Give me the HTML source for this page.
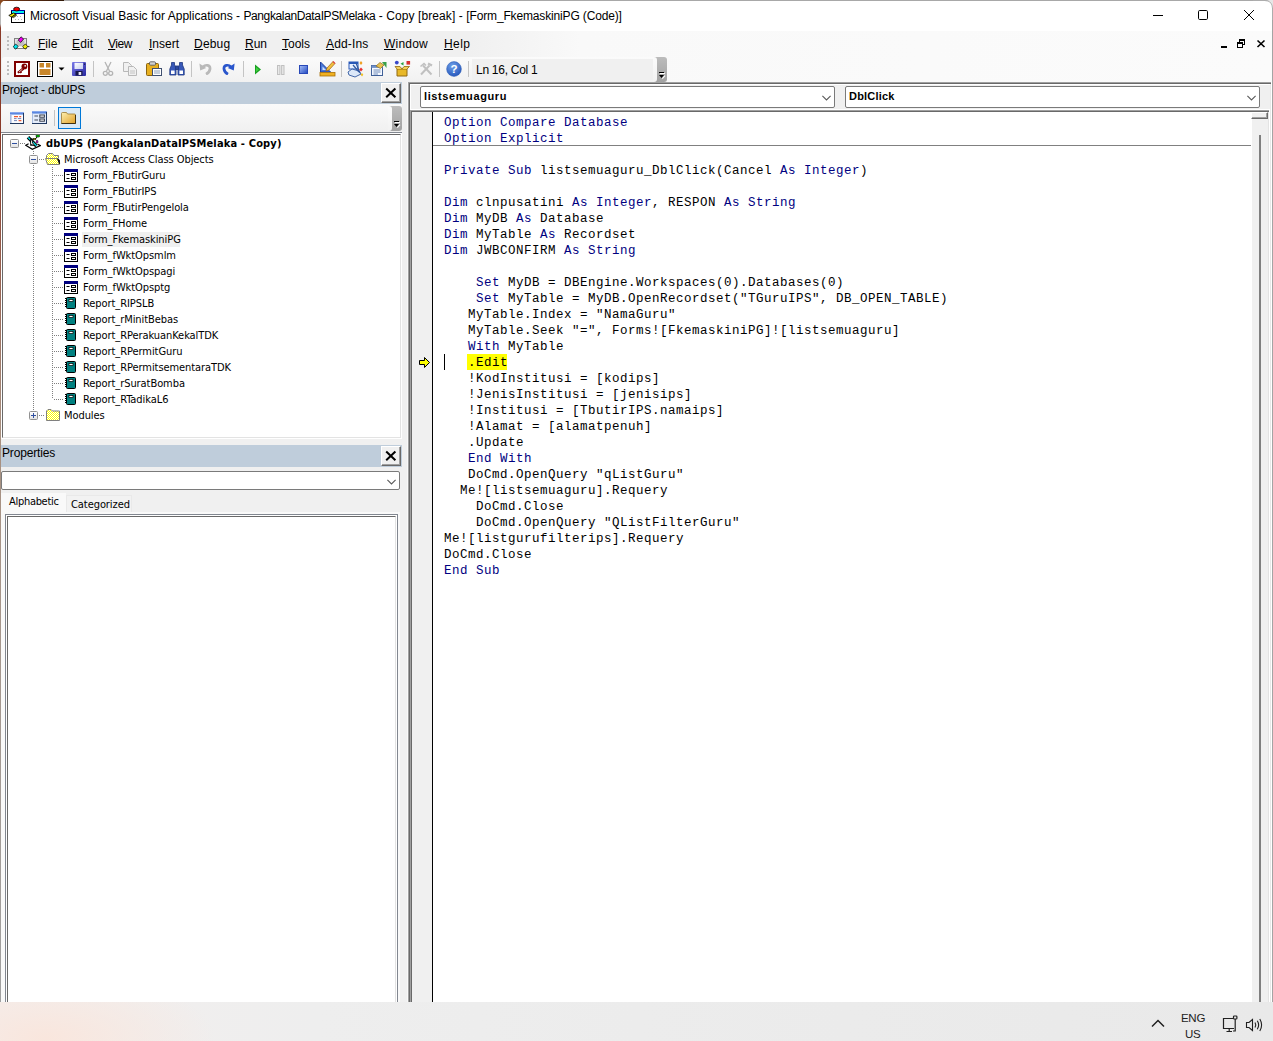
<!DOCTYPE html>
<html lang="en"><head><meta charset="utf-8"><title>Microsoft Visual Basic for Applications</title>
<style>
*{margin:0;padding:0;box-sizing:border-box}
html,body{width:1273px;height:1041px;overflow:hidden;background:#fff}
body{position:relative;font-family:"Liberation Sans",sans-serif;font-size:12px;color:#000}
.a{position:absolute}
.t{position:absolute;white-space:pre;line-height:1}
.ui{font-family:"Liberation Sans",sans-serif;font-size:11.6px}
.th{font-family:"DejaVu Sans Condensed","Liberation Sans",sans-serif;font-size:11px;letter-spacing:-0.07px}
.mono{font-family:"Liberation Mono",monospace;font-size:12.5px;letter-spacing:0.5px;line-height:16px;white-space:pre}
.k{color:#000080}
u{text-decoration:underline;text-underline-offset:1px}
</style></head>
<body>
<div class="a" style="left:0px;top:0px;width:1273px;height:1041px;background:#f0f0f0"></div>
<div class="a" style="left:0px;top:0px;width:1273px;height:31px;background:#fff"></div>
<div class="a" style="left:0px;top:31px;width:1273px;height:51px;background:linear-gradient(90deg,#f0f0f0 0,#f0f0f0 470px,#f9f9f9 580px,#fbfbfb 100%)"></div>
<div class="a" style="left:0px;top:0px;width:1px;height:1002px;background:linear-gradient(180deg,#b8b8b8 0,#b8b8b8 24px,#8a3a28 28px,#8a3a28 140px,#a89080 430px,#a0a0a0 1000px)"></div>
<div class="a" style="left:0px;top:0px;width:1273px;height:1px;background:#a8a8a8"></div>
<div class="a" style="left:0px;top:0px;width:64px;height:1px;background:linear-gradient(90deg,#7a3a18,#301808)"></div>
<svg class="a" style="left:0;top:0" width="6" height="6" viewBox="0 0 6 6"><path d="M0 0 H6 Q1 1 0 6 Z" fill="#8a4a20"/></svg>
<svg class="a" style="left:8px;top:6px" width="18" height="18" viewBox="0 0 18 18">
<rect x="3.5" y="4.5" width="13" height="12" fill="#fff" stroke="#000"/>
<rect x="3" y="4" width="14" height="1" fill="#0000a0"/><rect x="4" y="5" width="12" height="2" fill="#00f0f0"/><rect x="4" y="7" width="12" height="1" fill="#0000a0"/>
<ellipse cx="8.6" cy="3.1" rx="3" ry="1.9" fill="#f00000" stroke="#000" stroke-width=".8"/>
<path d="M0.8 9.4 L5.5 7 L8 8 L3.6 11 Z" fill="#f0f000" stroke="#000" stroke-width=".8"/><path d="M3.6 11 L8 8 L8.4 9.6 L5.6 11.6 Z" fill="#808000" stroke="#000" stroke-width=".6"/>
<g fill="#b0b0b0"><rect x="9" y="10" width="1" height="1"/><rect x="12" y="10" width="1" height="1"/><rect x="7" y="13" width="1" height="1"/><rect x="10" y="13" width="1" height="1"/><rect x="13" y="13" width="1" height="1"/></g>
</svg>
<div class="t ui" style="left:30px;top:10px;font-size:12px"><span style="letter-spacing:0.02px">Microsoft Visual Basic for Applications - </span><span style="letter-spacing:-0.37px">PangkalanDataIPSMelaka</span><span style="letter-spacing:0.09px"> - Copy [break] - </span><span style="letter-spacing:-0.15px">[Form_FkemaskiniPG (Code)]</span></div>
<svg class="a" style="left:1145px;top:0" width="128" height="31" viewBox="0 0 128 31" fill="none" stroke="#000" stroke-width="1">
<path d="M8 15.5 H18"/>
<rect x="53.5" y="10.5" width="9" height="9" rx="1.2"/>
<path d="M99 10 L109 20 M109 10 L99 20"/>
</svg>
<div class="a" style="left:7px;top:36px;width:2px;height:2px;background:#bcbcbc"></div>
<div class="a" style="left:7px;top:40px;width:2px;height:2px;background:#bcbcbc"></div>
<div class="a" style="left:7px;top:44px;width:2px;height:2px;background:#bcbcbc"></div>
<div class="a" style="left:7px;top:48px;width:2px;height:2px;background:#bcbcbc"></div>
<svg class="a" style="left:12px;top:35px" width="18" height="18" viewBox="0 0 18 18">
<rect x="2.5" y="3.5" width="12" height="10" fill="#e4e4e4" stroke="#808080"/>
<rect x="4.5" y="5.5" width="8" height="6" fill="#c0c0c0"/><rect x="6" y="11.5" width="5" height="1.5" fill="#fff"/>
<path d="M9 1.8 L11.6 4 L8.8 7.4 L6.2 5.2 Z" fill="#f000f0" stroke="#000" stroke-width=".7"/>
<path d="M3.6 9 L6.2 11.4 L3.8 14.2 L1.2 11.8 Z" fill="#00e8f0" stroke="#000" stroke-width=".7"/>
<path d="M13.4 9 L15.8 11.6 L13 14.2 L10.6 11.6 Z" fill="#f0f000" stroke="#000" stroke-width=".7"/>
<path d="M15.5 11.6 H17.5" stroke="#000" stroke-width=".8"/>
</svg>
<div class="t ui" style="left:38px;top:38px;font-size:12px;letter-spacing:0px"><u>F</u>ile</div>
<div class="t ui" style="left:72px;top:38px;font-size:12px;letter-spacing:0.15px"><u>E</u>dit</div>
<div class="t ui" style="left:108px;top:38px;font-size:12px;letter-spacing:-0.5px"><u>V</u>iew</div>
<div class="t ui" style="left:149px;top:38px;font-size:12px;letter-spacing:0px"><u>I</u>nsert</div>
<div class="t ui" style="left:194px;top:38px;font-size:12px;letter-spacing:0.2px"><u>D</u>ebug</div>
<div class="t ui" style="left:245px;top:38px;font-size:12px;letter-spacing:0px"><u>R</u>un</div>
<div class="t ui" style="left:282px;top:38px;font-size:12px;letter-spacing:0px"><u>T</u>ools</div>
<div class="t ui" style="left:326px;top:38px;font-size:12px;letter-spacing:0.15px"><u>A</u>dd-Ins</div>
<div class="t ui" style="left:384px;top:38px;font-size:12px;letter-spacing:0.2px"><u>W</u>indow</div>
<div class="t ui" style="left:444px;top:38px;font-size:12px;letter-spacing:0.4px"><u>H</u>elp</div>
<svg class="a" style="left:1215px;top:36px" width="56" height="16" viewBox="0 0 56 16" fill="none" stroke="#000">
<path d="M6 11 H12" stroke-width="2"/>
<g fill="#000" stroke="none" shape-rendering="crispEdges"><rect x="22" y="6" width="6" height="2"/><rect x="22" y="6" width="1" height="6"/><rect x="27" y="6" width="1" height="6"/><rect x="22" y="11" width="6" height="1"/>
<rect x="24" y="3" width="6" height="2"/><rect x="29" y="3" width="1" height="6"/><rect x="24" y="3" width="1" height="3"/><rect x="28" y="8" width="2" height="1"/></g>
<path d="M42.5 4.5 L49.5 11 M49.5 4.5 L42.5 11" stroke-width="1.6"/>
</svg>
<div class="a" style="left:2px;top:57px;width:665px;height:25px;background:linear-gradient(180deg,#fbfbfb,#f1f1f1);border-radius:3px 0 0 3px"></div>
<div class="a" style="left:7px;top:61px;width:2px;height:2px;background:#bcbcbc"></div>
<div class="a" style="left:7px;top:65px;width:2px;height:2px;background:#bcbcbc"></div>
<div class="a" style="left:7px;top:69px;width:2px;height:2px;background:#bcbcbc"></div>
<div class="a" style="left:7px;top:73px;width:2px;height:2px;background:#bcbcbc"></div>
<svg class="a" style="left:14px;top:61px" width="16" height="16" viewBox="0 0 16 16">
<rect x="1" y="1" width="14" height="14" fill="#fff" stroke="#800000" stroke-width="2"/>
<circle cx="10.4" cy="5.4" r="2.9" fill="#800000"/>
<path d="M8.6 6.6 L3.2 11 L4.4 12.6 L6 11.8 L6.6 12.6 L8 11.6 L7.6 10.6 L10.4 8.4 Z" fill="#800000"/>
<circle cx="11.2" cy="4.8" r=".9" fill="#fff"/><path d="M5 11 L8.4 8.2" stroke="#fff" stroke-width=".7"/>
</svg>
<svg class="a" style="left:37px;top:61px" width="16" height="16" viewBox="0 0 16 16">
<rect x="0.5" y="0.5" width="15" height="15" fill="#fff" stroke="#000"/>
<rect x="2.5" y="2" width="4.5" height="4.5" fill="#c8862a"/>
<rect x="9" y="2" width="4.5" height="4.5" fill="#c8862a"/>
<rect x="2.5" y="8" width="11" height="6" fill="#c8862a"/>
</svg>
<svg class="a" style="left:58px;top:67px" width="7" height="4" viewBox="0 0 7 4"><path d="M0.5 0.5 H6.5 L3.5 3.5 Z" fill="#000"/></svg>
<svg class="a" style="left:72px;top:62px" width="14" height="14" viewBox="0 0 14 14">
<defs><linearGradient id="sv" x1="0" y1="0" x2="1" y2="1"><stop offset="0" stop-color="#7878e8"/><stop offset="1" stop-color="#2828a0"/></linearGradient>
<linearGradient id="sl" x1="0" y1="0" x2="1" y2="1"><stop offset="0" stop-color="#ffffff"/><stop offset="1" stop-color="#c8d0f0"/></linearGradient></defs>
<rect x="0" y="0" width="14" height="14" rx="1" fill="url(#sv)"/>
<rect x="2.5" y="0.8" width="8.5" height="6.2" fill="url(#sl)"/>
<rect x="3.5" y="9" width="7" height="4.6" fill="#181848"/>
<rect x="6.6" y="10" width="2.6" height="3" fill="#e8e8f8"/><rect x="12.2" y="1.4" width="1" height="1.6" fill="#181848"/>
</svg>
<div class="a" style="left:93px;top:61px;width:1px;height:16px;background:#c4c4c4"></div>
<svg class="a" style="left:102px;top:61px" width="12" height="16" viewBox="0 0 12 16" fill="none" stroke="#b4b4b4" stroke-width="1.3">
<path d="M3 1 L7.5 10 M9 1 L4.5 10"/><circle cx="3.3" cy="12.3" r="2"/><circle cx="8.7" cy="12.3" r="2"/></svg>
<svg class="a" style="left:123px;top:62px" width="15" height="15" viewBox="0 0 15 15" fill="#f0f0f0" stroke="#b8b8b8">
<path d="M0.5 0.5 H5.5 L8.5 3.5 V9.5 H0.5 Z"/><path d="M5.5 4.5 H10.5 L13.5 7.5 V13.5 H5.5 Z"/><path d="M7 9 H12 M7 11 H12" stroke-width=".8"/></svg>
<svg class="a" style="left:146px;top:61px" width="17" height="16" viewBox="0 0 17 16">
<rect x="0.5" y="2.5" width="12" height="12" rx="1" fill="#e8b020" stroke="#8a6410"/>
<rect x="3.5" y="0.8" width="6" height="3.4" rx="1" fill="#d0d0d0" stroke="#505050" stroke-width=".8"/>
<rect x="6.5" y="7.5" width="9" height="7" fill="#fff" stroke="#405070"/>
<path d="M8 10 H14 M8 12 H14" stroke="#7088a8" stroke-width=".8"/></svg>
<svg class="a" style="left:169px;top:61px" width="16" height="16" viewBox="0 0 16 16" fill="#3858b8" stroke="#203880" stroke-width=".8">
<path d="M2.5 1.5 H5.5 V4 L7 7 V14 H0.8 V8 L2.5 4 Z"/><path d="M10.5 1.5 H13.5 V4 L15.2 8 V14 H9 V7 L10.5 4 Z"/>
<rect x="6.5" y="5" width="3" height="3.5" fill="#2a48a0"/>
<rect x="2" y="9.5" width="3.6" height="3.5" fill="#fff" stroke="none"/><rect x="10.4" y="9.5" width="3.6" height="3.5" fill="#fff" stroke="none"/></svg>
<div class="a" style="left:191px;top:61px;width:1px;height:16px;background:#c4c4c4"></div>
<svg class="a" style="left:199px;top:62px" width="14" height="13" viewBox="0 0 14 13" fill="none" stroke="#b9b9b9" stroke-width="2.7">
<path d="M4 5 C6.5 2.2 11.5 2.8 11 7 C10.7 9.4 9 11.2 7 12.2"/><path d="M0.4 1.6 L1.2 8.6 L7.2 6 Z" fill="#b9b9b9" stroke="none"/></svg>
<svg class="a" style="left:221px;top:62px" width="14" height="13" viewBox="0 0 14 13" fill="none" stroke="#2a56cc" stroke-width="2.7">
<path d="M10 5 C7.5 2.2 2.5 2.8 3 7 C3.3 9.4 5 11.2 7 12.2"/><path d="M13.6 1.6 L12.8 8.6 L6.8 6 Z" fill="#2a56cc" stroke="none"/></svg>
<div class="a" style="left:243px;top:61px;width:1px;height:16px;background:#c4c4c4"></div>
<svg class="a" style="left:255px;top:64px" width="6" height="11" viewBox="0 0 6 11"><path d="M0 0.5 L6 5.5 L0 10.5 Z" fill="#18a020"/><path d="M1 3 L4 5.5 L1 8 Z" fill="#40d040"/></svg>
<svg class="a" style="left:277px;top:65px" width="8" height="10" viewBox="0 0 8 10"><rect x="0.5" y="0.5" width="2.4" height="9" fill="#e8e8e8" stroke="#c0c0c0"/><rect x="4.6" y="0.5" width="2.4" height="9" fill="#e8e8e8" stroke="#c0c0c0"/></svg>
<svg class="a" style="left:299px;top:65px" width="9" height="9" viewBox="0 0 9 9"><defs><linearGradient id="st" x1="0" y1="0" x2="1" y2="1"><stop offset="0" stop-color="#a8c0f8"/><stop offset="1" stop-color="#2048c0"/></linearGradient></defs><rect x="0.5" y="0.5" width="8" height="8" fill="url(#st)" stroke="#2848b8"/></svg>
<svg class="a" style="left:319px;top:60px" width="17" height="17" viewBox="0 0 17 17">
<path d="M1.5 2 V12 H11.5 Z" fill="#4878d8" stroke="#2040a0"/><path d="M3.5 6.5 V10 H7 Z" fill="#cfe0ff"/>
<rect x="1" y="12.5" width="15" height="3.5" fill="#f0b020" stroke="#a87008" stroke-width=".8"/>
<path d="M7 11 L8 8 L14 1.5 L16 3.5 L10 10 Z" fill="#f0c040" stroke="#a06010" stroke-width=".7"/><path d="M13.5 2 L15.5 4 L16.3 3 L14.4 1 Z" fill="#e04848"/></svg>
<div class="a" style="left:341px;top:61px;width:1px;height:16px;background:#c4c4c4"></div>
<svg class="a" style="left:347px;top:60px" width="18" height="18" viewBox="0 0 18 18">
<rect x="2" y="2" width="9" height="7" fill="#e8f0ff" stroke="#2858b8"/><rect x="2" y="2" width="9" height="2" fill="#2858b8"/>
<path d="M1 12 L5 9 L12 11 L14 14 L8 17 L2 15 Z" fill="#dce8f8" stroke="#3058a0" stroke-width=".9"/>
<path d="M6 5 L12 12 M9 3 L13 13" stroke="#3058a0" stroke-width="1.2"/>
<path d="M14 1 L15.5 3 L14 5 L12.5 3 Z" fill="#f0a020"/><path d="M14 7.5 L15.8 9.5 L14 11.5 L12.2 9.5 Z" fill="#e83030"/><path d="M15 13 L16.3 14.8 L15 16.6 L13.7 14.8 Z" fill="#f0c020"/></svg>
<svg class="a" style="left:370px;top:61px" width="17" height="16" viewBox="0 0 17 16">
<rect x="1.5" y="4.5" width="11" height="10" fill="#f4f8ff" stroke="#406098"/><rect x="1.5" y="4.5" width="11" height="2.4" fill="#7090c8"/>
<path d="M3.5 9 H10.5 M3.5 11 H10.5 M3.5 13 H8" stroke="#6080b0" stroke-width=".9"/>
<path d="M6 5 L10 1.5 L14 4 L10.5 7.5 Z" fill="#e8c050" stroke="#907020" stroke-width=".7"/>
<path d="M12 1 H16.5 V7 Z" fill="#38a048"/></svg>
<svg class="a" style="left:394px;top:60px" width="17" height="18" viewBox="0 0 17 18">
<path d="M3 9 H13 V16 H3 Z" fill="#e8b828" stroke="#906810"/><path d="M3 9 L1 6.5 H6 L8 9 L10 6.5 H15.5 L13 9" fill="#f4d058" stroke="#906810" stroke-width=".8"/>
<circle cx="2.8" cy="2.6" r="1.9" fill="#3848c8"/><path d="M9.5 2 L6.5 3.8 L9.5 5.6 Z" fill="#28a040"/><rect x="12.5" y="1" width="3.6" height="3.6" fill="#d83030"/></svg>
<svg class="a" style="left:419px;top:62px" width="15" height="14" viewBox="0 0 15 14" fill="none" stroke="#c0c0c0" stroke-width="2">
<path d="M2 12.5 L10.5 3.5"/><path d="M12.5 12.5 L4 3.5"/><path d="M1.5 4.5 L5 1.5 L7 3.5" stroke-width="1.6"/><path d="M9 1.5 L13 3.5" stroke-width="2.2"/></svg>
<div class="a" style="left:439px;top:61px;width:1px;height:16px;background:#c4c4c4"></div>
<svg class="a" style="left:446px;top:61px" width="16" height="16" viewBox="0 0 18 18">
<defs><radialGradient id="hg" cx=".4" cy=".3" r=".8"><stop offset="0" stop-color="#6ea0e8"/><stop offset="1" stop-color="#2050b8"/></radialGradient></defs>
<circle cx="9" cy="9" r="8.3" fill="url(#hg)" stroke="#3060b8" stroke-width=".6"/>
<text x="9" y="13.6" text-anchor="middle" font-family="Liberation Sans,sans-serif" font-weight="bold" font-size="13" fill="#fff">?</text></svg>
<div class="a" style="left:468px;top:61px;width:1px;height:16px;background:#c4c4c4"></div>
<div class="a" style="left:472px;top:59px;width:182px;height:21px;background:#f0f0f0"></div>
<div class="t ui" style="left:476px;top:64px;font-size:12px;letter-spacing:-0.27px">Ln 16, Col 1</div>
<div class="a" style="left:654px;top:57px;width:13px;height:25px;background:linear-gradient(180deg,#bcbcbc,#a2a2a2);border-radius:0 3px 3px 0"></div>
<div class="a" style="left:653px;top:57px;width:4px;height:25px;background:linear-gradient(180deg,#fbfbfb,#f2f2f2);border-radius:0 3px 3px 0"></div>
<svg class="a" style="left:659px;top:72px" width="7" height="8" viewBox="0 0 7 8"><rect x="1" y="1" width="5" height="1" fill="#fff"/><rect x="0" y="0" width="5" height="1" fill="#000"/><path d="M3.3 6.6 L6 3.6" stroke="#fff" stroke-width="1.1"/><path d="M0 3 H5 L2.5 6 Z" fill="#000"/></svg>
<div class="a" style="left:1px;top:82px;width:401px;height:22px;background:#bfcddb"></div>
<div class="t ui" style="left:2px;top:84px;font-size:12px;letter-spacing:-0.2px">Project - dbUPS</div>
<div class="a" style="left:381px;top:83px;width:20px;height:20px;background:#f0f0f0;border-top:1px solid #fff;border-left:1px solid #fff;border-right:1px solid #696969;border-bottom:1px solid #696969;box-shadow:inset -1px -1px 0 #a0a0a0"></div>
<svg class="a" style="left:385px;top:87px" width="12" height="12" viewBox="0 0 12 12"><path d="M1.2 1.5 L10.4 10.3 M10.4 1.5 L1.2 10.3" stroke="#000" stroke-width="2" fill="none"/></svg>
<div class="a" style="left:1px;top:104px;width:401px;height:28px;background:linear-gradient(180deg,#fafafa,#f0f0f0)"></div>
<div class="a" style="left:1px;top:132px;width:401px;height:1px;background:#828790"></div>
<div class="a" style="left:389px;top:106px;width:13px;height:25px;background:linear-gradient(180deg,#bcbcbc,#a2a2a2);border-radius:0 3px 3px 0"></div>
<div class="a" style="left:388px;top:106px;width:4px;height:25px;background:linear-gradient(180deg,#fbfbfb,#f2f2f2);border-radius:0 3px 3px 0"></div>
<svg class="a" style="left:394px;top:121px" width="7" height="8" viewBox="0 0 7 8"><rect x="1" y="1" width="5" height="1" fill="#fff"/><rect x="0" y="0" width="5" height="1" fill="#000"/><path d="M3.3 6.6 L6 3.6" stroke="#fff" stroke-width="1.1"/><path d="M0 3 H5 L2.5 6 Z" fill="#000"/></svg>
<svg class="a" style="left:10px;top:112px" width="14" height="12" viewBox="0 0 14 12">
<rect x="0" y="0" width="14" height="12" fill="#fbfcff"/><rect x="0" y="0" width="14" height="2.6" fill="#5a86e0"/><rect x="0" y="0" width="14" height="1" fill="#86a8ec"/>
<rect x="0" y="2.6" width="1.6" height="9.4" fill="#a8bce0"/><rect x="13" y="1" width="1" height="11" fill="#203860"/><rect x="0" y="11" width="14" height="1" fill="#203860"/>
<path d="M4 4.6 H8 M9.2 4.6 H11.2 M8.6 8.6 H11.4" stroke="#f05a30" stroke-width="1.1"/><path d="M4 6.6 H6.6 M7.8 6.6 H11.2 M4 8.6 H7" stroke="#7888b8" stroke-width="1"/></svg>
<svg class="a" style="left:32px;top:111px" width="15" height="13" viewBox="0 0 15 13">
<rect x="0" y="0" width="15" height="13" fill="#e4ecfa"/><rect x="0" y="0" width="15" height="2.6" fill="#5a86e0"/><rect x="0" y="0" width="15" height="1" fill="#86a8ec"/>
<rect x="14" y="1" width="1" height="12" fill="#203860"/><rect x="0" y="12" width="15" height="1" fill="#203860"/><rect x="0" y="2.6" width="1" height="9.4" fill="#a8bce0"/>
<path d="M2.4 5 H6 M2.4 9 H6" stroke="#404858" stroke-width="1.1"/><rect x="7.8" y="4" width="4.6" height="2.2" fill="#fff" stroke="#303848" stroke-width="1"/><rect x="7.8" y="8" width="4.6" height="2.2" fill="#fff" stroke="#303848" stroke-width="1"/></svg>
<div class="a" style="left:54px;top:110px;width:1px;height:16px;background:#c4c4c4"></div>
<div class="a" style="left:58px;top:107px;width:23px;height:22px;background:#d9e9f6;border:1px solid #0078d7"></div>
<svg class="a" style="left:61px;top:112px" width="15" height="12" viewBox="0 0 15 12">
<defs><linearGradient id="fg" x1="0" y1="0" x2="1" y2="1"><stop offset="0" stop-color="#fdf0b0"/><stop offset="1" stop-color="#e0a028"/></linearGradient></defs>
<path d="M0.5 1.5 Q0.5 0.5 1.5 0.5 H5.5 L6.5 2 H13.5 Q14.5 2 14.5 3 V11.5 H0.5 Z" fill="url(#fg)" stroke="#9a7830" stroke-width=".8"/>
<path d="M0.5 11.5 H14.5 V3" fill="none" stroke="#403010" stroke-width="1"/></svg>
<div class="a" style="left:1px;top:133px;width:401px;height:306px;background:#fff"></div>
<div class="a" style="left:2px;top:134px;width:399px;height:304px;background:#fff;border-top:1px solid #696969;border-left:1px solid #696969;border-right:1px solid #e3e3e3;border-bottom:1px solid #e3e3e3"></div>
<div class="a" style="left:33px;top:151px;width:1px;height:260px;background:repeating-linear-gradient(180deg,#808080 0 1px,transparent 1px 2px)"></div>
<div class="a" style="left:52px;top:167px;width:1px;height:232px;background:repeating-linear-gradient(180deg,#808080 0 1px,transparent 1px 2px)"></div>
<div class="a" style="left:20px;top:143px;width:5px;height:1px;background:repeating-linear-gradient(90deg,#808080 0 1px,transparent 1px 2px)"></div>
<div class="a" style="left:39px;top:159px;width:6px;height:1px;background:repeating-linear-gradient(90deg,#808080 0 1px,transparent 1px 2px)"></div>
<div class="a" style="left:39px;top:415px;width:6px;height:1px;background:repeating-linear-gradient(90deg,#808080 0 1px,transparent 1px 2px)"></div>
<div class="a" style="left:10px;top:139px;width:9px;height:9px;background:linear-gradient(180deg,#fff,#e4e4e4);border:1px solid #919191;border-radius:1.5px"></div>
<div class="a" style="left:12px;top:143px;width:5px;height:1px;background:#3050a0"></div>
<svg class="a" style="left:25px;top:135px" width="16" height="15" viewBox="0 0 16 15">
<path d="M0.7 10.3 L4 8.6 L12.5 8.8 L15.3 10.6 L7.3 14.3 Z" fill="#fff"/>
<path d="M3.6 8.8 L0.7 10.3 L7.3 14.3 L15.3 10.6 L12.8 9.2" fill="none" stroke="#000" stroke-width="1.2"/>
<path d="M3 2.2 L11.5 11" stroke="#000" stroke-width="3.4"/><path d="M3.2 2.6 L6 5.2 M7.2 6.6 L11.6 10.8" stroke="#00e8f0" stroke-width="1.3"/>
<path d="M6.5 3.5 L6.5 9.5 L9 9.5" stroke="#000" stroke-width="2.6" fill="none"/><path d="M6.6 5.5 L6.6 9 L8.6 9" stroke="#fff" stroke-width="1" fill="none"/>
<path d="M8.5 4.5 L11.2 3.3 L12.3 1.2" stroke="#000" stroke-width="1" fill="none"/>
<rect x="11" y="0" width="3.6" height="2" rx=".8" fill="#00e000" stroke="#000" stroke-width=".6"/>
<rect x="8.2" y="3.3" width="2.6" height="1.5" fill="#f0f000" stroke="#000" stroke-width=".5"/>
<rect x="11.3" y="5.3" width="1.6" height="2.8" rx=".7" fill="#f000f0" stroke="#000" stroke-width=".6"/></svg>
<div class="t th" style="left:46px;top:138px;font-weight:bold;letter-spacing:0.15px">dbUPS (PangkalanDataIPSMelaka - Copy)</div>
<div class="a" style="left:29px;top:155px;width:9px;height:9px;background:linear-gradient(180deg,#fff,#e4e4e4);border:1px solid #919191;border-radius:1.5px"></div>
<div class="a" style="left:31px;top:159px;width:5px;height:1px;background:#3050a0"></div>
<svg class="a" style="left:45px;top:153px" width="16" height="13" viewBox="0 0 16 13">
<defs><pattern id="dth" width="2" height="2" patternUnits="userSpaceOnUse"><rect width="2" height="2" fill="#ffff00"/><rect width="1" height="1" fill="#fff"/><rect x="1" y="1" width="1" height="1" fill="#fff"/></pattern></defs>
<path d="M1.5 5.5 V2.5 L3.5 0.5 H7.5 L9 2.5 H13.5 V5.5" fill="url(#dth)" stroke="#808080"/>
<path d="M0.5 5.5 H12.5 L14.5 11.5 H2.5 Z" fill="url(#dth)" stroke="#808080"/>
<path d="M12.6 5.8 L14.4 7 L14.6 10.8 Z" fill="#000" stroke="#000" stroke-width=".8"/></svg>
<div class="t th" style="left:64px;top:154px;">Microsoft Access Class Objects</div>
<div class="a" style="left:54px;top:175px;width:10px;height:1px;background:repeating-linear-gradient(90deg,#808080 0 1px,transparent 1px 2px)"></div>
<svg class="a" style="left:64px;top:169px" width="14" height="13" viewBox="0 0 14 13"><rect x="0.5" y="0.5" width="13" height="12" fill="#fff" stroke="#000"/><rect x="0" y="0" width="14" height="3" fill="#000080"/>
<path d="M2.5 5.5 H5.5 M2.5 9.5 H5.5" stroke="#000" stroke-width="1"/><rect x="7.5" y="4.5" width="4" height="2" fill="#fff" stroke="#000"/><rect x="7.5" y="8.5" width="4" height="2" fill="#fff" stroke="#000"/></svg>
<div class="t th" style="left:83px;top:170px;">Form_FButirGuru</div>
<div class="a" style="left:54px;top:191px;width:10px;height:1px;background:repeating-linear-gradient(90deg,#808080 0 1px,transparent 1px 2px)"></div>
<svg class="a" style="left:64px;top:185px" width="14" height="13" viewBox="0 0 14 13"><rect x="0.5" y="0.5" width="13" height="12" fill="#fff" stroke="#000"/><rect x="0" y="0" width="14" height="3" fill="#000080"/>
<path d="M2.5 5.5 H5.5 M2.5 9.5 H5.5" stroke="#000" stroke-width="1"/><rect x="7.5" y="4.5" width="4" height="2" fill="#fff" stroke="#000"/><rect x="7.5" y="8.5" width="4" height="2" fill="#fff" stroke="#000"/></svg>
<div class="t th" style="left:83px;top:186px;">Form_FButirIPS</div>
<div class="a" style="left:54px;top:207px;width:10px;height:1px;background:repeating-linear-gradient(90deg,#808080 0 1px,transparent 1px 2px)"></div>
<svg class="a" style="left:64px;top:201px" width="14" height="13" viewBox="0 0 14 13"><rect x="0.5" y="0.5" width="13" height="12" fill="#fff" stroke="#000"/><rect x="0" y="0" width="14" height="3" fill="#000080"/>
<path d="M2.5 5.5 H5.5 M2.5 9.5 H5.5" stroke="#000" stroke-width="1"/><rect x="7.5" y="4.5" width="4" height="2" fill="#fff" stroke="#000"/><rect x="7.5" y="8.5" width="4" height="2" fill="#fff" stroke="#000"/></svg>
<div class="t th" style="left:83px;top:202px;">Form_FButirPengelola</div>
<div class="a" style="left:54px;top:223px;width:10px;height:1px;background:repeating-linear-gradient(90deg,#808080 0 1px,transparent 1px 2px)"></div>
<svg class="a" style="left:64px;top:217px" width="14" height="13" viewBox="0 0 14 13"><rect x="0.5" y="0.5" width="13" height="12" fill="#fff" stroke="#000"/><rect x="0" y="0" width="14" height="3" fill="#000080"/>
<path d="M2.5 5.5 H5.5 M2.5 9.5 H5.5" stroke="#000" stroke-width="1"/><rect x="7.5" y="4.5" width="4" height="2" fill="#fff" stroke="#000"/><rect x="7.5" y="8.5" width="4" height="2" fill="#fff" stroke="#000"/></svg>
<div class="t th" style="left:83px;top:218px;">Form_FHome</div>
<div class="a" style="left:54px;top:239px;width:10px;height:1px;background:repeating-linear-gradient(90deg,#808080 0 1px,transparent 1px 2px)"></div>
<div class="a" style="left:82px;top:232px;width:98px;height:15px;background:#f0f0f0"></div>
<svg class="a" style="left:64px;top:233px" width="14" height="13" viewBox="0 0 14 13"><rect x="0.5" y="0.5" width="13" height="12" fill="#fff" stroke="#000"/><rect x="0" y="0" width="14" height="3" fill="#000080"/>
<path d="M2.5 5.5 H5.5 M2.5 9.5 H5.5" stroke="#000" stroke-width="1"/><rect x="7.5" y="4.5" width="4" height="2" fill="#fff" stroke="#000"/><rect x="7.5" y="8.5" width="4" height="2" fill="#fff" stroke="#000"/></svg>
<div class="t th" style="left:83px;top:234px;">Form_FkemaskiniPG</div>
<div class="a" style="left:54px;top:255px;width:10px;height:1px;background:repeating-linear-gradient(90deg,#808080 0 1px,transparent 1px 2px)"></div>
<svg class="a" style="left:64px;top:249px" width="14" height="13" viewBox="0 0 14 13"><rect x="0.5" y="0.5" width="13" height="12" fill="#fff" stroke="#000"/><rect x="0" y="0" width="14" height="3" fill="#000080"/>
<path d="M2.5 5.5 H5.5 M2.5 9.5 H5.5" stroke="#000" stroke-width="1"/><rect x="7.5" y="4.5" width="4" height="2" fill="#fff" stroke="#000"/><rect x="7.5" y="8.5" width="4" height="2" fill="#fff" stroke="#000"/></svg>
<div class="t th" style="left:83px;top:250px;">Form_fWktOpsmlm</div>
<div class="a" style="left:54px;top:271px;width:10px;height:1px;background:repeating-linear-gradient(90deg,#808080 0 1px,transparent 1px 2px)"></div>
<svg class="a" style="left:64px;top:265px" width="14" height="13" viewBox="0 0 14 13"><rect x="0.5" y="0.5" width="13" height="12" fill="#fff" stroke="#000"/><rect x="0" y="0" width="14" height="3" fill="#000080"/>
<path d="M2.5 5.5 H5.5 M2.5 9.5 H5.5" stroke="#000" stroke-width="1"/><rect x="7.5" y="4.5" width="4" height="2" fill="#fff" stroke="#000"/><rect x="7.5" y="8.5" width="4" height="2" fill="#fff" stroke="#000"/></svg>
<div class="t th" style="left:83px;top:266px;">Form_fWktOpspagi</div>
<div class="a" style="left:54px;top:287px;width:10px;height:1px;background:repeating-linear-gradient(90deg,#808080 0 1px,transparent 1px 2px)"></div>
<svg class="a" style="left:64px;top:281px" width="14" height="13" viewBox="0 0 14 13"><rect x="0.5" y="0.5" width="13" height="12" fill="#fff" stroke="#000"/><rect x="0" y="0" width="14" height="3" fill="#000080"/>
<path d="M2.5 5.5 H5.5 M2.5 9.5 H5.5" stroke="#000" stroke-width="1"/><rect x="7.5" y="4.5" width="4" height="2" fill="#fff" stroke="#000"/><rect x="7.5" y="8.5" width="4" height="2" fill="#fff" stroke="#000"/></svg>
<div class="t th" style="left:83px;top:282px;">Form_fWktOpsptg</div>
<div class="a" style="left:54px;top:303px;width:10px;height:1px;background:repeating-linear-gradient(90deg,#808080 0 1px,transparent 1px 2px)"></div>
<svg class="a" style="left:64px;top:297px" width="12" height="12" viewBox="0 0 12 12"><rect x="2.5" y="0.5" width="9" height="11" rx="1" fill="#008080" stroke="#000"/><rect x="5" y="2.5" width="4" height="2" fill="#fff" stroke="#000" stroke-width=".7"/>
<path d="M1 1.5 H3 M1 3.5 H3 M1 5.5 H3 M1 7.5 H3 M1 9.5 H3" stroke="#000" stroke-width="1"/><path d="M1 2.5 H2 M1 4.5 H2 M1 6.5 H2 M1 8.5 H2 M1 10.5 H2" stroke="#fff" stroke-width="1"/></svg>
<div class="t th" style="left:83px;top:298px;">Report_RIPSLB</div>
<div class="a" style="left:54px;top:319px;width:10px;height:1px;background:repeating-linear-gradient(90deg,#808080 0 1px,transparent 1px 2px)"></div>
<svg class="a" style="left:64px;top:313px" width="12" height="12" viewBox="0 0 12 12"><rect x="2.5" y="0.5" width="9" height="11" rx="1" fill="#008080" stroke="#000"/><rect x="5" y="2.5" width="4" height="2" fill="#fff" stroke="#000" stroke-width=".7"/>
<path d="M1 1.5 H3 M1 3.5 H3 M1 5.5 H3 M1 7.5 H3 M1 9.5 H3" stroke="#000" stroke-width="1"/><path d="M1 2.5 H2 M1 4.5 H2 M1 6.5 H2 M1 8.5 H2 M1 10.5 H2" stroke="#fff" stroke-width="1"/></svg>
<div class="t th" style="left:83px;top:314px;">Report_rMinitBebas</div>
<div class="a" style="left:54px;top:335px;width:10px;height:1px;background:repeating-linear-gradient(90deg,#808080 0 1px,transparent 1px 2px)"></div>
<svg class="a" style="left:64px;top:329px" width="12" height="12" viewBox="0 0 12 12"><rect x="2.5" y="0.5" width="9" height="11" rx="1" fill="#008080" stroke="#000"/><rect x="5" y="2.5" width="4" height="2" fill="#fff" stroke="#000" stroke-width=".7"/>
<path d="M1 1.5 H3 M1 3.5 H3 M1 5.5 H3 M1 7.5 H3 M1 9.5 H3" stroke="#000" stroke-width="1"/><path d="M1 2.5 H2 M1 4.5 H2 M1 6.5 H2 M1 8.5 H2 M1 10.5 H2" stroke="#fff" stroke-width="1"/></svg>
<div class="t th" style="left:83px;top:330px;">Report_RPerakuanKekalTDK</div>
<div class="a" style="left:54px;top:351px;width:10px;height:1px;background:repeating-linear-gradient(90deg,#808080 0 1px,transparent 1px 2px)"></div>
<svg class="a" style="left:64px;top:345px" width="12" height="12" viewBox="0 0 12 12"><rect x="2.5" y="0.5" width="9" height="11" rx="1" fill="#008080" stroke="#000"/><rect x="5" y="2.5" width="4" height="2" fill="#fff" stroke="#000" stroke-width=".7"/>
<path d="M1 1.5 H3 M1 3.5 H3 M1 5.5 H3 M1 7.5 H3 M1 9.5 H3" stroke="#000" stroke-width="1"/><path d="M1 2.5 H2 M1 4.5 H2 M1 6.5 H2 M1 8.5 H2 M1 10.5 H2" stroke="#fff" stroke-width="1"/></svg>
<div class="t th" style="left:83px;top:346px;">Report_RPermitGuru</div>
<div class="a" style="left:54px;top:367px;width:10px;height:1px;background:repeating-linear-gradient(90deg,#808080 0 1px,transparent 1px 2px)"></div>
<svg class="a" style="left:64px;top:361px" width="12" height="12" viewBox="0 0 12 12"><rect x="2.5" y="0.5" width="9" height="11" rx="1" fill="#008080" stroke="#000"/><rect x="5" y="2.5" width="4" height="2" fill="#fff" stroke="#000" stroke-width=".7"/>
<path d="M1 1.5 H3 M1 3.5 H3 M1 5.5 H3 M1 7.5 H3 M1 9.5 H3" stroke="#000" stroke-width="1"/><path d="M1 2.5 H2 M1 4.5 H2 M1 6.5 H2 M1 8.5 H2 M1 10.5 H2" stroke="#fff" stroke-width="1"/></svg>
<div class="t th" style="left:83px;top:362px;">Report_RPermitsementaraTDK</div>
<div class="a" style="left:54px;top:383px;width:10px;height:1px;background:repeating-linear-gradient(90deg,#808080 0 1px,transparent 1px 2px)"></div>
<svg class="a" style="left:64px;top:377px" width="12" height="12" viewBox="0 0 12 12"><rect x="2.5" y="0.5" width="9" height="11" rx="1" fill="#008080" stroke="#000"/><rect x="5" y="2.5" width="4" height="2" fill="#fff" stroke="#000" stroke-width=".7"/>
<path d="M1 1.5 H3 M1 3.5 H3 M1 5.5 H3 M1 7.5 H3 M1 9.5 H3" stroke="#000" stroke-width="1"/><path d="M1 2.5 H2 M1 4.5 H2 M1 6.5 H2 M1 8.5 H2 M1 10.5 H2" stroke="#fff" stroke-width="1"/></svg>
<div class="t th" style="left:83px;top:378px;">Report_rSuratBomba</div>
<div class="a" style="left:54px;top:399px;width:10px;height:1px;background:repeating-linear-gradient(90deg,#808080 0 1px,transparent 1px 2px)"></div>
<svg class="a" style="left:64px;top:393px" width="12" height="12" viewBox="0 0 12 12"><rect x="2.5" y="0.5" width="9" height="11" rx="1" fill="#008080" stroke="#000"/><rect x="5" y="2.5" width="4" height="2" fill="#fff" stroke="#000" stroke-width=".7"/>
<path d="M1 1.5 H3 M1 3.5 H3 M1 5.5 H3 M1 7.5 H3 M1 9.5 H3" stroke="#000" stroke-width="1"/><path d="M1 2.5 H2 M1 4.5 H2 M1 6.5 H2 M1 8.5 H2 M1 10.5 H2" stroke="#fff" stroke-width="1"/></svg>
<div class="t th" style="left:83px;top:394px;">Report_RTadikaL6</div>
<div class="a" style="left:29px;top:411px;width:9px;height:9px;background:linear-gradient(180deg,#fff,#e4e4e4);border:1px solid #919191;border-radius:1.5px"></div>
<div class="a" style="left:31px;top:415px;width:5px;height:1px;background:#3050a0"></div>
<div class="a" style="left:33px;top:413px;width:1px;height:5px;background:#3050a0"></div>
<svg class="a" style="left:46px;top:409px" width="15" height="12" viewBox="0 0 15 12">
<path d="M0.5 11.5 V2 L2 0.5 H5 L6.5 2 H13.5 V11.5 Z" fill="url(#dth)" stroke="#808080"/></svg>
<div class="t th" style="left:64px;top:410px;">Modules</div>
<div class="a" style="left:1px;top:445px;width:401px;height:22px;background:#bfcddb"></div>
<div class="t ui" style="left:2px;top:447px;font-size:12px;letter-spacing:-0.15px">Properties</div>
<div class="a" style="left:381px;top:446px;width:20px;height:20px;background:#f0f0f0;border-top:1px solid #fff;border-left:1px solid #fff;border-right:1px solid #696969;border-bottom:1px solid #696969;box-shadow:inset -1px -1px 0 #a0a0a0"></div>
<svg class="a" style="left:385px;top:450px" width="12" height="12" viewBox="0 0 12 12"><path d="M1.2 1.5 L10.4 10.3 M10.4 1.5 L1.2 10.3" stroke="#000" stroke-width="2" fill="none"/></svg>
<div class="a" style="left:1px;top:471px;width:399px;height:19px;background:#fff;border:1px solid #7a7a7a;border-radius:2px"></div>
<svg class="a" style="left:387px;top:479px" width="10" height="6" viewBox="0 0 10 6"><path d="M0.4 0.9 L4.5 5 L8.6 0.9" fill="none" stroke="#5a5a5a" stroke-width="1.1"/></svg>
<div class="a" style="left:1px;top:493px;width:65px;height:20px;background:#f9f9f9"></div>
<div class="a" style="left:1px;top:512px;width:399px;height:490px;background:#f9f9f9"></div>
<div class="a" style="left:66px;top:495px;width:66px;height:17px;background:#f2f2f2;border:1px solid #e9e9e9;border-bottom:none"></div>
<div class="t th" style="left:9px;top:496px;letter-spacing:-0.3px">Alphabetic</div>
<div class="t th" style="left:71px;top:499px;">Categorized</div>
<div class="a" style="left:5px;top:514px;width:393px;height:495px;background:#fff;border:1px solid #828790"></div>
<div class="a" style="left:7px;top:516px;width:389px;height:490px;background:#fff;border-top:1px solid #696969;border-left:1px solid #696969;border-right:1px solid #e3e3e3"></div>
<div class="a" style="left:402px;top:82px;width:6px;height:920px;background:#f0f0f0"></div>
<div class="a" style="left:407px;top:82px;width:1px;height:920px;background:#f8f8f8"></div>
<div class="a" style="left:408px;top:82px;width:863px;height:920px;background:#f0f0f0;border-top:1px solid #a0a0a0;border-left:1px solid #a0a0a0;box-shadow:inset 1px 1px 0 #696969, inset 2px 2px 0 #fff"></div>
<div class="a" style="left:1270px;top:84px;width:1px;height:918px;background:#e8e8e8"></div>
<div class="a" style="left:1271px;top:82px;width:1px;height:920px;background:#fff"></div>
<div class="a" style="left:1272px;top:8px;width:1px;height:994px;background:#a4a4a4"></div>
<svg class="a" style="left:1253px;top:0" width="20" height="20" viewBox="0 0 20 20"><path d="M20 0 H11 Q20 0 20 9 Z" fill="#e6e6e6"/><path d="M0 0.5 H11.5 Q19.5 0.5 19.5 8.5 V20" fill="none" stroke="#adadad" stroke-width="1"/></svg>
<div class="a" style="left:420px;top:86px;width:415px;height:22px;background:#fff;border:1px solid #7a7a7a;border-radius:2px"></div>
<svg class="a" style="left:822px;top:95px" width="10" height="6" viewBox="0 0 10 6"><path d="M0.4 0.9 L4.5 5 L8.6 0.9" fill="none" stroke="#5a5a5a" stroke-width="1.1"/></svg>
<div class="t ui" style="left:424px;top:91px;font-weight:bold;font-size:11px;letter-spacing:0.6px">listsemuaguru</div>
<div class="a" style="left:845px;top:86px;width:415px;height:22px;background:#fff;border:1px solid #7a7a7a;border-radius:2px"></div>
<svg class="a" style="left:1247px;top:95px" width="10" height="6" viewBox="0 0 10 6"><path d="M0.4 0.9 L4.5 5 L8.6 0.9" fill="none" stroke="#5a5a5a" stroke-width="1.1"/></svg>
<div class="t ui" style="left:849px;top:91px;font-weight:bold;font-size:11px;letter-spacing:0.2px">DblClick</div>
<div class="a" style="left:410px;top:109px;width:860px;height:1px;background:#fff"></div>
<div class="a" style="left:410px;top:110px;width:859px;height:892px;background:#fff;border-top:1px solid #a0a0a0;border-left:1px solid #a0a0a0;box-shadow:inset 1px 1px 0 #696969"></div>
<div class="a" style="left:412px;top:112px;width:20px;height:890px;background:#f0f0f0"></div>
<div class="a" style="left:432px;top:112px;width:1px;height:890px;background:#000"></div>
<div class="a" style="left:1252px;top:112px;width:17px;height:890px;background:#f0f0f0"></div>
<div class="a" style="left:1259px;top:135px;width:2px;height:867px;background:#7f7f7f"></div>
<div class="a" style="left:1268px;top:112px;width:1px;height:890px;background:#e3e3e3"></div>
<div class="a" style="left:1269px;top:110px;width:1px;height:892px;background:#fff"></div>
<div class="a" style="left:1251px;top:112px;width:17px;height:7px;background:#f0f0f0;border-top:1px solid #fff;border-left:1px solid #fff;border-right:1px solid #696969;border-bottom:1px solid #696969;box-shadow:inset -1px -1px 0 #a0a0a0"></div>
<div class="a" style="left:433px;top:145px;width:818px;height:1px;background:#808080"></div>
<div class="a" style="left:467px;top:354px;width:40px;height:16px;background:#ffff00"></div>
<div class="a mono" style="left:444px;top:115px"><div style="height:16px"><span class="k">Option Compare Database</span></div><div style="height:16px"><span class="k">Option Explicit</span></div><div style="height:16px"> </div><div style="height:16px"><span class="k">Private Sub</span> listsemuaguru_DblClick(Cancel <span class="k">As Integer</span>)</div><div style="height:16px"> </div><div style="height:16px"><span class="k">Dim</span> clnpusatini <span class="k">As Integer</span>, RESPON <span class="k">As String</span></div><div style="height:16px"><span class="k">Dim</span> MyDB <span class="k">As</span> Database</div><div style="height:16px"><span class="k">Dim</span> MyTable <span class="k">As</span> Recordset</div><div style="height:16px"><span class="k">Dim</span> JWBCONFIRM <span class="k">As String</span></div><div style="height:16px"> </div><div style="height:16px">    <span class="k">Set</span> MyDB = DBEngine.Workspaces(0).Databases(0)</div><div style="height:16px">    <span class="k">Set</span> MyTable = MyDB.OpenRecordset("TGuruIPS", DB_OPEN_TABLE)</div><div style="height:16px">   MyTable.Index = "NamaGuru"</div><div style="height:16px">   MyTable.Seek "=", Forms![FkemaskiniPG]![listsemuaguru]</div><div style="height:16px">   <span class="k">With</span> MyTable</div><div style="height:16px">   .Edit</div><div style="height:16px">   !KodInstitusi = [kodips]</div><div style="height:16px">   !JenisInstitusi = [jenisips]</div><div style="height:16px">   !Institusi = [TbutirIPS.namaips]</div><div style="height:16px">   !Alamat = [alamatpenuh]</div><div style="height:16px">   .Update</div><div style="height:16px">   <span class="k">End With</span></div><div style="height:16px">   DoCmd.OpenQuery "qListGuru"</div><div style="height:16px">  Me![listsemuaguru].Requery</div><div style="height:16px">    DoCmd.Close</div><div style="height:16px">    DoCmd.OpenQuery "QListFilterGuru"</div><div style="height:16px">Me![listgurufilterips].Requery</div><div style="height:16px">DoCmd.Close</div><div style="height:16px"><span class="k">End Sub</span></div></div>
<div class="a" style="left:444px;top:354px;width:1px;height:16px;background:#000"></div>
<svg class="a" style="left:418px;top:356px" width="13" height="13" viewBox="0 0 13 13"><path d="M1.5 4.5 H6.5 V1.5 L11.5 6.5 L6.5 11.5 V8.5 H1.5 Z" fill="#ffff00" stroke="#000" stroke-width="1"/></svg>
<div class="a" style="left:0px;top:1002px;width:1273px;height:39px;background:radial-gradient(ellipse 170px 70px at 45px 36px,#f9e6dd 0%,rgba(249,230,221,0.55) 45%,rgba(249,230,221,0) 100%),linear-gradient(90deg,#f3efee 0%,#eeeeee 25%,#ececec 50%,#e9e9e9 100%)"></div>
<svg class="a" style="left:1150px;top:1018px" width="16" height="10" viewBox="0 0 16 10"><path d="M2 8.5 L8 2.5 L14 8.5" fill="none" stroke="#202020" stroke-width="1.5"/></svg>
<div class="t ui" style="left:1181px;top:1013px;font-size:11.5px;color:#222;letter-spacing:-0.3px">ENG</div>
<div class="t ui" style="left:1185px;top:1029px;font-size:11.5px;color:#222;letter-spacing:-0.3px">US</div>
<svg class="a" style="left:1221px;top:1014px" width="20" height="20" viewBox="0 0 20 20" fill="none" stroke="#202020" stroke-width="1.2">
<path d="M12 4.5 H2.5 V14.5 H13"/><path d="M5.5 17.5 H11 M8.2 14.5 V17.5"/><rect x="12.5" y="2" width="3.4" height="3" rx=".8"/><path d="M14.2 5 V17 H12"/></svg>
<svg class="a" style="left:1245px;top:1016px" width="20" height="18" viewBox="0 0 20 18" fill="none" stroke="#202020" stroke-width="1.1">
<path d="M1.5 6.5 H4 L7.5 3.5 V14.5 L4 11.5 H1.5 Z"/><path d="M10 6.5 Q11.6 9 10 11.5"/><path d="M12.3 4.8 Q15 9 12.3 13.2"/><path d="M14.8 3 Q18.4 9 14.8 15"/></svg>
</body></html>
